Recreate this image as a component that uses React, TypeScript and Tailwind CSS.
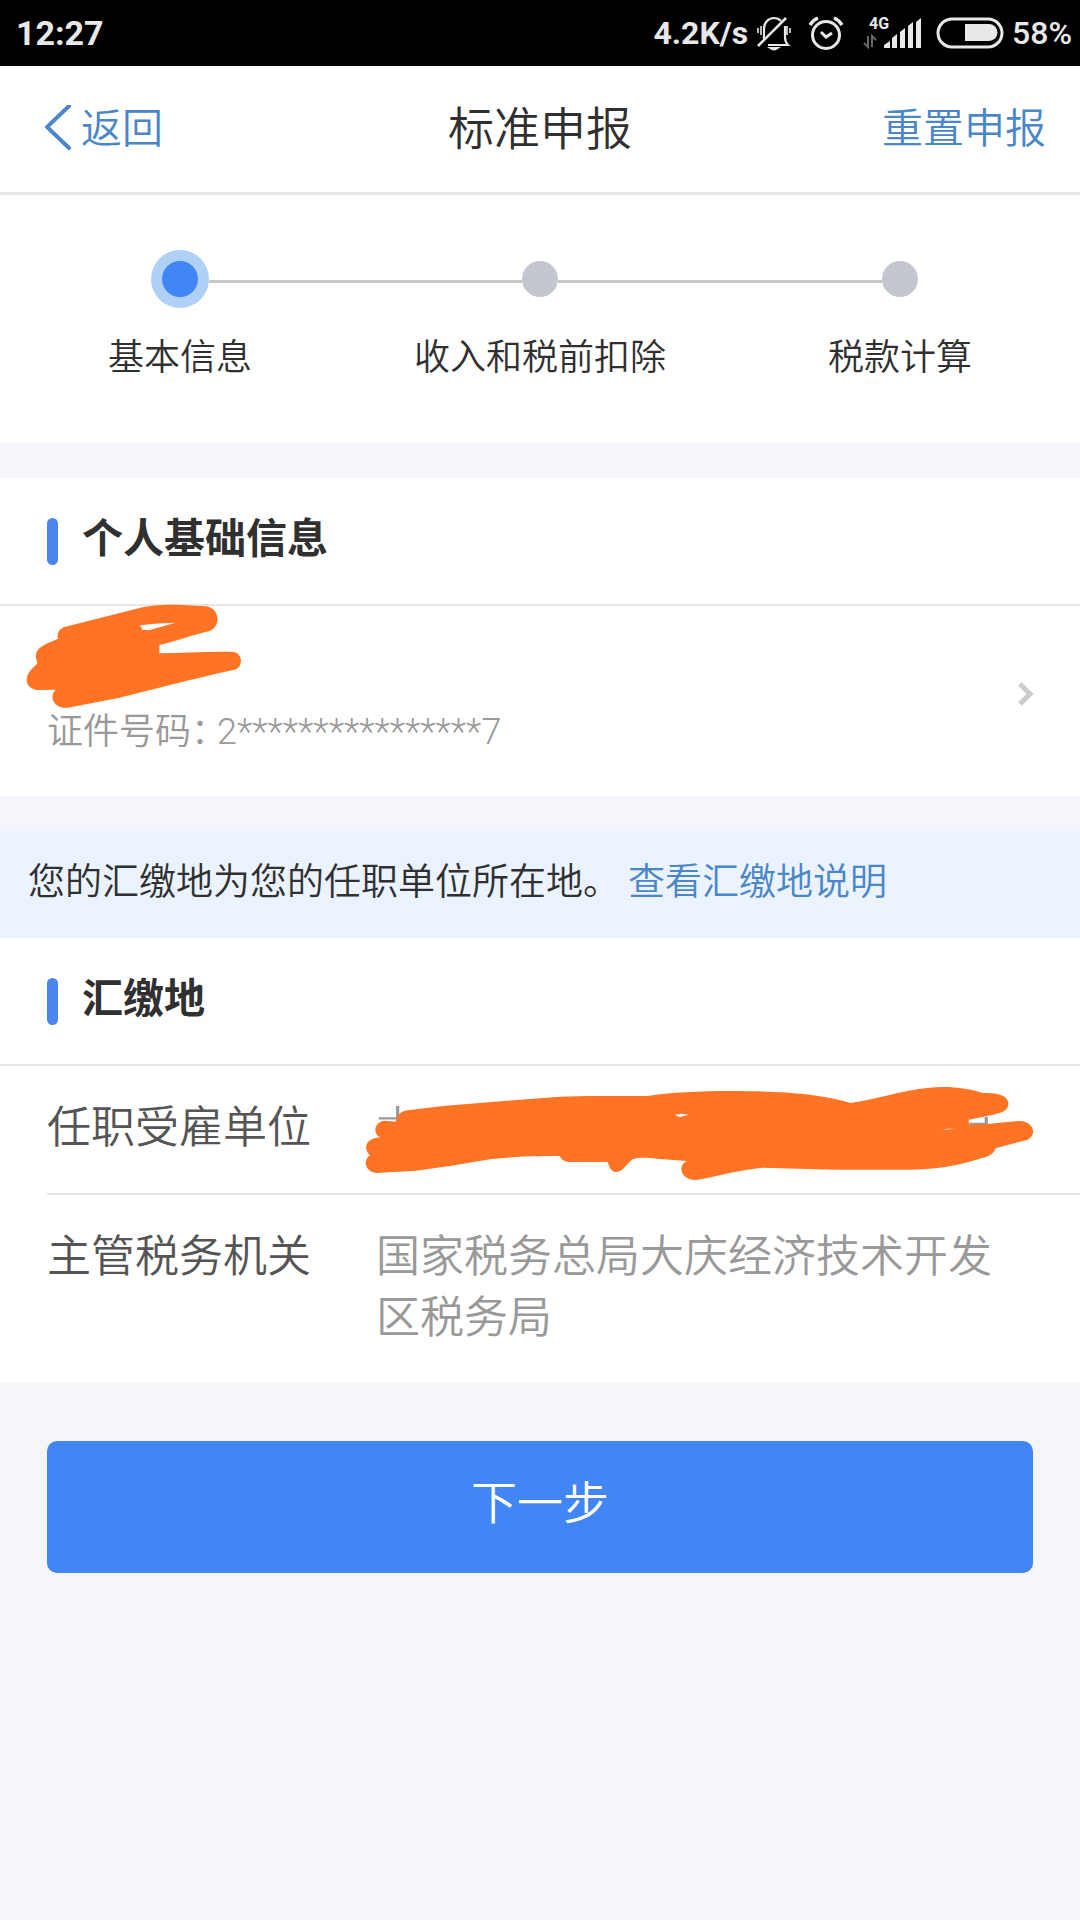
import { ReactNode } from 'react'

interface Step {
  label: string
  active?: boolean
}

const STEPS: Step[] = [
  { label: '基本信息', active: true },
  { label: '收入和税前扣除' },
  { label: '税款计算' },
]

function StatusBar() {
  return (
    <div className="flex h-[66px] items-center justify-between bg-black pl-4 pr-2 leading-[40px] text-[#e8e8e8]">
      <span className="text-[34px] font-bold">12:27</span>
      <div className="flex items-center text-[32px]">
        <span className="font-bold">4.2K/s</span>

        {/* Silent mode */}
        <svg className="ml-2 h-9 w-9" viewBox="0 0 36 36" fill="none" stroke="currentColor" strokeWidth="2.2">
          <path d="M8 24V14c0-6 4-11 10-11 3 0 5 1 7 3" />
          <path d="M29 11v11c0 3 1 6 3 8H12" />
          <path d="M2 31 30 3" strokeWidth="2.6" />
          <path d="M11 32h14l-4 2.500q-3 2-6 0z" fill="currentColor" stroke="none" />
          <path d="M2 13v5M5 11v9M31 11v9M34 13v5" strokeWidth="1.6" />
        </svg>

        {/* Alarm */}
        <svg className="ml-4 h-9 w-9" viewBox="0 0 36 36" fill="none" stroke="currentColor" strokeWidth="3">
          <circle cx="18" cy="20" r="13.500" />
          <path d="m13 17 5 5 6-4" />
          <path d="M2 10q3-5 8-7M26 3q5 2 8 7" strokeWidth="3.500" />
        </svg>

        {/* Mobile signal */}
        <svg className="ml-4 h-9 w-[64px]" viewBox="0 0 64 36">
          <text x="9" y="14" fontSize="16" fontWeight="700" fill="currentColor">4G</text>
          <path d="M8 21v11l-4-4M12 32V21l4 4" fill="none" stroke="#666" strokeWidth="2" />
          <path d="M22 33v-3l6-4v7zM30 33V23l5-4v14zM38 33V17l5-4v20zM46 33V11l5-4v26zM54 33V7l5-4v30z" fill="currentColor" transform="translate(2 0)" />
        </svg>

        {/* Battery */}
        <svg className="ml-3 h-8 w-[68px]" viewBox="0 0 68 32">
          <rect x="2" y="2" width="64" height="28" rx="14" fill="none" stroke="currentColor" strokeWidth="3" />
          <path d="M29 7h24a8 8 0 0 1 0 17H29z" fill="currentColor" />
        </svg>
        <span className="ml-2 font-medium">58%</span>
      </div>
    </div>
  )
}

function Stepper() {
  return (
    <ol className="grid grid-cols-3 bg-white pb-[61px] pt-[55px]">
      {STEPS.map((step, i) => (
        <li key={step.label} className="flex flex-col items-center">
          <div className="flex h-[58px] w-full items-center">
            <span className={i === 0 ? 'flex-1' : 'mt-1 h-[3px] flex-1 bg-[#c8c8c8]'} />
            {step.active ? (
              <span className="flex size-[58px] items-center justify-center rounded-full bg-[#aed1f5]">
                <span className="size-9 rounded-full bg-[#4285f4]" />
              </span>
            ) : (
              <span className="size-9 rounded-full bg-[#c5c7d0]" />
            )}
            <span className={i === STEPS.length - 1 ? 'flex-1' : 'mt-1 h-[3px] flex-1 bg-[#c8c8c8]'} />
          </div>
          <span className="mt-[26px] text-[36px] leading-[48px]">{step.label}</span>
        </li>
      ))}
    </ol>
  )
}

function SectionTitle({ children }: { children: ReactNode }) {
  return (
    <div className="flex h-[128px] items-center gap-6 border-b-2 border-[#e6e6e6] pl-[47px]">
      <span className="h-[47px] w-[11px] rounded-full bg-[#4a86ee]" />
      <h2 className="pb-1 text-[41px] font-bold leading-[48px]">{children}</h2>
    </div>
  )
}

// Marker strokes that hide the taxpayer's name
function NameMask() {
  return (
    <svg className="absolute -top-1.5 left-5 h-[110px] w-[230px]" viewBox="58 30 668 330" preserveAspectRatio="none" fill="#ff7424" aria-hidden="true">
      <path
        fillRule="evenodd"
        d="M168 146C164 128 174 114 190 110L408 53C450 43 505 41 600 49C638 56 644 110 606 124C560 134 500 158 463 165V190C530 190 600 184 678 186C706 190 708 234 678 240C560 266 440 300 340 325L205 352C160 362 138 322 162 299L110 300C72 296 62 258 108 222C108 212 102 204 105 192C108 168 140 160 168 146ZM405 106Q460 98 510 98Q465 110 433 121L413 119Q412 110 405 106Z"
      />
    </svg>
  )
}

// Marker strokes that hide the employer's name
function EmployerMask() {
  return (
    <svg className="absolute left-[313px] top-3.5 h-[106px] w-[680px]" viewBox="44 30 1481 318" preserveAspectRatio="none" fill="#ff7424" aria-hidden="true">
      <path d="M85 145H126M126 108V150M1370 162H1408V140" fill="none" stroke="#999" strokeWidth="7" />
      <path
        fillRule="evenodd"
        d="M88 202C70 190 76 154 98 152L122 155C124 138 130 124 148 121L225 108L420 86Q480 79 540 78H670C760 58 930 60 1015 73Q1070 82 1113 99C1160 90 1230 60 1280 54C1320 46 1370 54 1400 69C1440 66 1458 82 1456 104C1455 122 1440 130 1410 138L1370 149V164L1410 162L1480 153C1516 154 1520 204 1490 212L1428 235C1424 256 1410 260 1390 268C1340 290 1290 299 1240 299H1080L920 293C860 302 820 320 775 330C740 330 736 284 756 273L690 266C670 262 650 262 638 267C622 284 618 306 600 306C588 302 588 290 583 276H500C488 274 482 268 479 258C420 258 380 260 330 267L240 288L165 302L80 309C54 304 50 270 66 256C52 240 52 206 88 202ZM730 134L745 131L760 134L740 142ZM1314 180L1322 176L1340 176Z"
      />
    </svg>
  )
}

export default function App() {
  return (
    <div className="min-h-screen bg-[#f4f6fb] font-[Roboto,'Noto_Sans_CJK_SC',sans-serif] font-[350] text-[#303030]">
      <StatusBar />

      <header className="grid h-[129px] grid-cols-3 items-center border-b-3 border-[#e6e6e6] bg-white px-[34px]">
        <button className="flex items-center gap-2 justify-self-start pl-[11px] text-[41px] leading-[48px] text-[#4a86c8]">
          <svg className="h-12 w-7" viewBox="0 0 28 48" fill="none" stroke="currentColor" strokeWidth="4" strokeLinecap="round">
            <path d="M24 1 2 22 24 43" />
          </svg>
          返回
        </button>
        <h1 className="justify-self-center text-[46px] leading-[56px]">标准申报</h1>
        <button className="justify-self-end text-[41px] leading-[48px] text-[#4a86c8]">重置申报</button>
      </header>

      <Stepper />

      {/* Personal information */}
      <section className="mt-[35px] bg-white">
        <SectionTitle>个人基础信息</SectionTitle>
        <div className="relative flex h-[190px] items-end justify-between pb-10 pl-[47px] pr-[46px]">
          <NameMask />
          <p className="flex gap-2 text-[36px] leading-[48px] text-[#999]">
            <span className="[font-feature-settings:'halt']">证件号码：</span>
            <span>2****************7</span>
          </p>
          <svg className="mb-[50px] h-6 w-4" viewBox="0 0 16 24" fill="none" stroke="#ccc" strokeWidth="5" aria-hidden="true">
            <path d="m2 2 10 10L2 22" />
          </svg>
        </div>
      </section>

      <p className="mt-[35px] flex h-[107px] items-center gap-2 bg-[#eaf3ff] pb-1 pl-7 text-[37px] leading-[48px]">
        您的汇缴地为您的任职单位所在地。
        <a href="#collection-place" className="text-[#4a86c8]">查看汇缴地说明</a>
      </p>

      {/* Place of collection */}
      <section id="collection-place" className="bg-white">
        <SectionTitle>汇缴地</SectionTitle>
        <dl className="ml-[47px] text-[44px] leading-[61px]">
          <div className="relative flex h-[129px] border-b-2 border-[#e6e6e6] pt-8">
            <dt className="w-[329px] shrink-0 text-[#555]">任职受雇单位</dt>
            <dd>
              <EmployerMask />
            </dd>
          </div>
          <div className="flex pb-[34px] pr-[46px] pt-8">
            <dt className="w-[329px] shrink-0 text-[#555]">主管税务机关</dt>
            <dd className="flex-1 text-[#999]">国家税务总局大庆经济技术开发区税务局</dd>
          </div>
        </dl>
      </section>

      <div className="px-[47px] pt-[58px]">
        <button className="h-[132px] w-full rounded-[10px] bg-[#4285f4] pb-2 text-[46px] leading-[56px] text-white">
          下一步
        </button>
      </div>
    </div>
  )
}
